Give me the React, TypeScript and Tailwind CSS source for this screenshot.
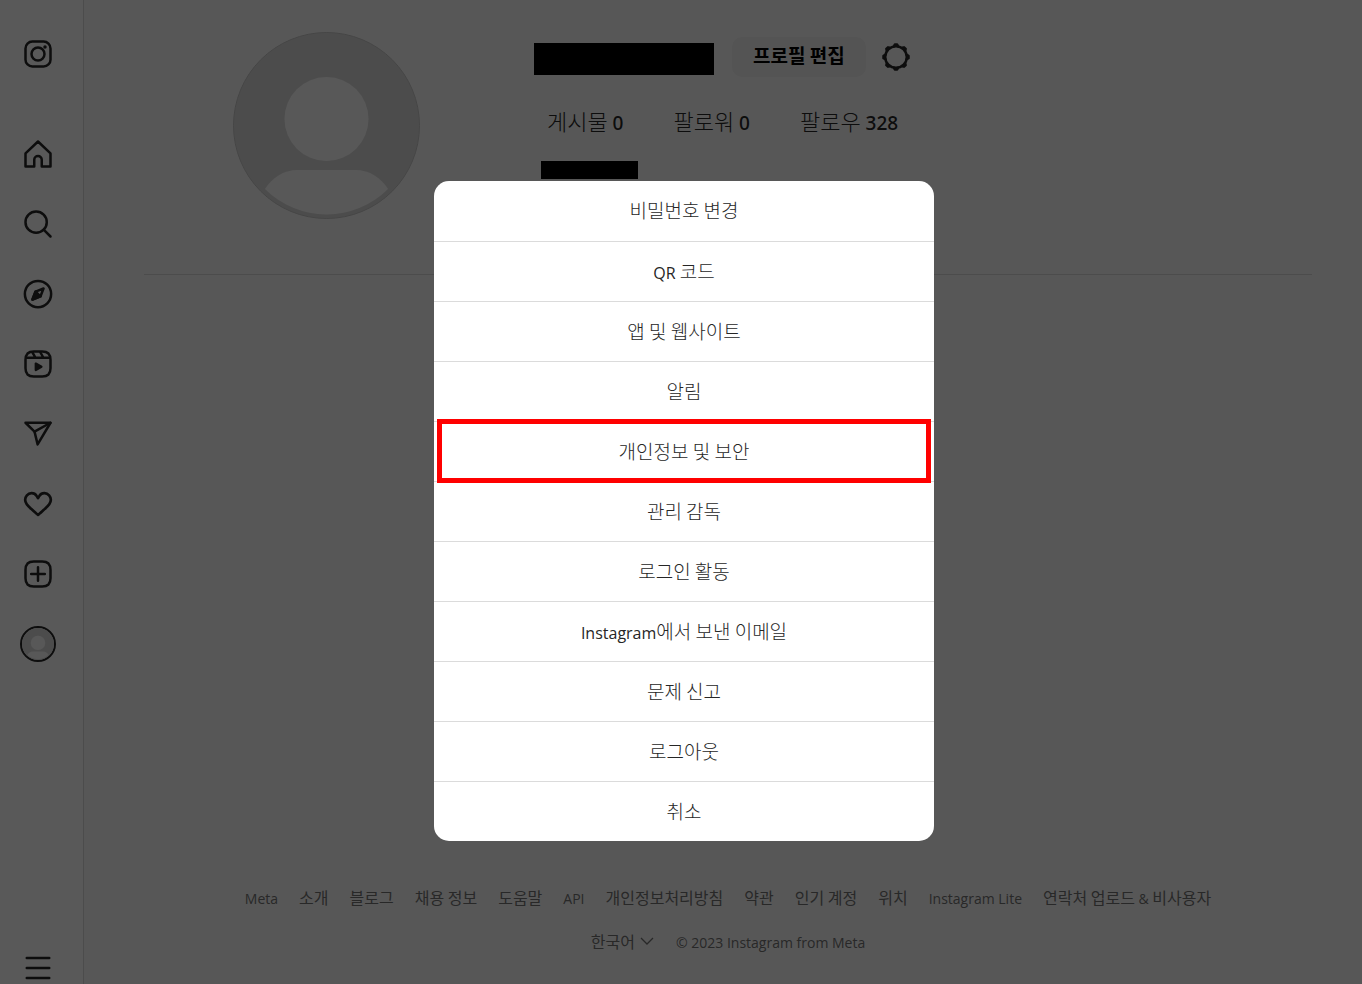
import React from "react";

const navButton = "flex h-[70px] w-full items-center justify-center text-[#262626]";

const menuItems = [
  { label: "비밀번호 변경" },
  { label: "QR 코드" },
  { label: "앱 및 웹사이트" },
  { label: "알림" },
  { label: "개인정보 및 보안", highlighted: true },
  { label: "관리 감독" },
  { label: "로그인 활동" },
  { label: "Instagram에서 보낸 이메일" },
  { label: "문제 신고" },
  { label: "로그아웃" },
  { label: "취소" },
];

const stats = [
  { label: "게시물", value: 0 },
  { label: "팔로워", value: 0 },
  { label: "팔로우", value: 328 },
];

const footerLinks = [
  "Meta",
  "소개",
  "블로그",
  "채용 정보",
  "도움말",
  "API",
  "개인정보처리방침",
  "약관",
  "인기 계정",
  "위치",
  "Instagram Lite",
  "연락처 업로드 & 비사용자",
];

// Latin words run wider than the Hangul next to them, so they get their own font and size
function MixedText({ text, latinClass }: { text: string; latinClass: string }) {
  return (
    <>
      {text.split(/([A-Za-z0-9©&]+(?: [A-Za-z0-9]+)*)/).map((part, index) =>
        index % 2 === 1 ? (
          <span key={index} className={latinClass}>
            {part}
          </span>
        ) : (
          part
        )
      )}
    </>
  );
}

function Icon({ children }: { children: React.ReactNode }) {
  return (
    <svg
      className="h-[30px] w-[30px]"
      viewBox="0 0 24 24"
      fill="none"
      stroke="currentColor"
      strokeWidth="2"
      strokeLinejoin="round"
      strokeLinecap="round"
      aria-hidden="true"
    >
      {children}
    </svg>
  );
}

function Avatar({ className }: { className: string }) {
  return (
    <svg className={className} viewBox="0 0 187 187" aria-hidden="true">
      <circle cx="93.500" cy="93.500" r="93" fill="#dbdbdb" stroke="#c7c7c7" />
      <circle cx="93.500" cy="87" r="42" fill="#fdfdfd" />
      <path d="M32 157C39 146 50 138 65 138H122C137 138 148 146 155 157A87 87 0 0 1 32 157Z" fill="#fdfdfd" />
    </svg>
  );
}

const navItems = [
  {
    name: "홈",
    icon: (
      <path d="M9.005 16.545a2.997 2.997 0 0 1 2.997-2.997A2.997 2.997 0 0 1 15 16.545V22h7V11.543L12 2 2 11.543V22h7.005Z" />
    ),
  },
  {
    name: "검색",
    icon: (
      <>
        <path d="M19 10.500A8.500 8.500 0 1 1 10.500 2a8.500 8.500 0 0 1 8.500 8.500Z" />
        <path d="m16.511 16.511 5.489 5.489" />
      </>
    ),
  },
  {
    name: "탐색 탭",
    icon: (
      <>
        <path d="M13.941 13.953 7.581 16.424 10.060 10.056 16.420 7.585Z" />
        <path d="M10.060 10.056 13.949 13.945 7.581 16.424Z" fill="currentColor" />
        <circle cx="12.001" cy="12.005" r="10.500" />
      </>
    ),
  },
  {
    name: "릴스",
    icon: (
      <>
        <path d="M2.050 7.002h19.900M13.504 2.001l2.858 5.001M7.207 2.110l2.795 4.892" strokeLinecap="butt" />
        <path d="M2 12.001v3.449c0 2.849.698 4.006 1.606 4.945.940.908 2.098 1.607 4.946 1.607h6.896c2.848 0 4.006-.699 4.946-1.607.908-.939 1.606-2.096 1.606-4.945V8.552c0-2.848-.698-4.006-1.606-4.945C19.454 2.699 18.296 2 15.448 2H8.552c-2.848 0-4.006.699-4.946 1.607C2.698 4.546 2 5.704 2 8.552Z" />
        <path
          d="M9.763 17.664a.908.908 0 0 1-.454-.787V11.630a.909.909 0 0 1 1.364-.788l4.545 2.624a.909.909 0 0 1 0 1.575l-4.545 2.624a.910.910 0 0 1-.910 0Z"
          fill="currentColor"
          stroke="none"
        />
      </>
    ),
  },
  {
    name: "메시지",
    icon: (
      <>
        <path d="M22 3 9.218 10.083" />
        <path d="M11.698 20.334 22 3.001H2l7.218 7.083 2.480 10.250Z" />
      </>
    ),
  },
  {
    name: "알림",
    icon: (
      <path
        d="M16.792 3.904A4.989 4.989 0 0 1 21.500 9.122c0 3.072-2.652 4.959-5.197 7.222-2.512 2.243-3.865 3.469-4.303 3.752-.477-.309-2.143-1.823-4.303-3.752C5.141 14.072 2.500 12.167 2.500 9.122a4.989 4.989 0 0 1 4.708-5.218 4.210 4.210 0 0 1 3.675 1.941c.840 1.175.980 1.763 1.120 1.763s.278-.588 1.110-1.766a4.170 4.170 0 0 1 3.679-1.938Z"
        transform="translate(12 12) scale(1.080 1.080) translate(-12 -12)"
      />
    ),
  },
  {
    name: "만들기",
    icon: (
      <>
        <path d="M2 12v3.450c0 2.849.698 4.005 1.606 4.944.940.909 2.098 1.608 4.946 1.608h6.896c2.848 0 4.006-.700 4.946-1.608C21.302 19.455 22 18.300 22 15.450V8.552c0-2.849-.698-4.006-1.606-4.945C19.454 2.700 18.296 2 15.448 2H8.552c-2.848 0-4.006.699-4.946 1.607C2.698 4.547 2 5.703 2 8.552Z" />
        <path d="M6.545 12.001h10.910M12.003 6.545v10.910" />
      </>
    ),
  },
];

function Sidebar() {
  return (
    <nav className="flex w-[84px] shrink-0 flex-col border-r border-[#dbdbdb] bg-white pr-[7px] pt-[19px]">
      <a href="#" aria-label="Instagram" className={`${navButton} mb-[30px]`}>
        <Icon>
          <rect x="2" y="2" width="20" height="20" rx="5.500" />
          <circle cx="12" cy="12" r="5.200" />
          <circle cx="17.600" cy="6.400" r="1.400" fill="currentColor" stroke="none" />
        </Icon>
      </a>
      {navItems.map((item) => (
        <a key={item.name} href="#" aria-label={item.name} className={navButton}>
          <Icon>{item.icon}</Icon>
        </a>
      ))}
      <a href="#" aria-label="프로필" className={navButton}>
        <span className="rounded-full border-2 border-[#262626]">
          <Avatar className="h-8 w-8" />
        </span>
      </a>
      <button type="button" aria-label="더 보기" className="mt-auto flex justify-center pb-px text-[#262626]">
        <Icon>
          <path d="M3 4h18M3 12h18M3 20h18" />
        </Icon>
      </button>
    </nav>
  );
}

function ProfileHeader() {
  return (
    <header className="flex h-[275px] border-b border-[#dbdbdb] pl-[89px] pt-8">
      <Avatar className="h-[187px] w-[187px] shrink-0" />
      <section className="ml-[114px]">
        <div className="flex items-start pt-[5px]">
          <div className="mt-[6px] h-8 w-[180px] bg-black" />
          <button
            type="button"
            className="ml-[18px] h-10 rounded-[10px] bg-[#efefef] px-[21px] pb-1 text-[19px] leading-6 font-bold text-black"
          >
            프로필 편집
          </button>
          <button type="button" aria-label="옵션" className="ml-[15px] flex h-10 items-center text-[#262626]">
            <svg className="h-[30px] w-[30px]" viewBox="0 0 24 24" fill="none" stroke="currentColor" aria-hidden="true">
              <circle cx="12" cy="12" r="8.635" strokeWidth="2" />
              <path
                d="M14.232 3.656a1.269 1.269 0 0 1-.796-.660L12.930 2h-1.860l-.505.996a1.269 1.269 0 0 1-.796.660m-.001 16.688a1.269 1.269 0 0 1 .796.660l.505.996h1.862l.505-.996a1.269 1.269 0 0 1 .796-.660M3.656 9.768a1.269 1.269 0 0 1-.660.796L2 11.070v1.862l.996.505a1.269 1.269 0 0 1 .660.796m16.688-.001a1.269 1.269 0 0 1 .660-.796L22 12.930v-1.860l-.996-.505a1.269 1.269 0 0 1-.660-.796M7.678 4.522a1.269 1.269 0 0 1-1.030.096l-1.060-.348L4.270 5.587l.348 1.062a1.269 1.269 0 0 1-.096 1.030m11.800 11.799a1.269 1.269 0 0 1 1.030-.096l1.060.348 1.318-1.317-.348-1.062a1.269 1.269 0 0 1 .096-1.030m-14.956.001a1.269 1.269 0 0 1 .096 1.030l-.348 1.060 1.317 1.318 1.062-.348a1.269 1.269 0 0 1 1.030.096m11.799-11.800a1.269 1.269 0 0 1-.096-1.030l.348-1.060-1.317-1.318-1.062.348a1.269 1.269 0 0 1-1.030-.096"
                fill="currentColor"
                strokeWidth="2"
                strokeLinejoin="round"
              />
            </svg>
          </button>
        </div>
        <ul className="ml-[13px] mt-[27px] flex gap-[50px] text-[22px] leading-8 font-light text-[#262626]">
          {stats.map((stat) => (
            <li key={stat.label}>
              {stat.label}{" "}
              <span className="font-['Noto_Sans'] text-[19px] font-medium">{stat.value}</span>
            </li>
          ))}
        </ul>
        <div className="ml-[7px] mt-[22px] h-[18px] w-[97px] bg-black" />
      </section>
    </header>
  );
}

function Footer() {
  const latinClass = "font-['Open_Sans'] text-[14px] leading-none";

  return (
    <footer className="mt-auto pb-[31px] text-[16px] leading-6 text-[#737373]">
      <ul className="flex flex-wrap justify-center gap-[21px]">
        {footerLinks.map((link) => (
          <li key={link}>
            <a href="#">
              <MixedText text={link} latinClass={latinClass} />
            </a>
          </li>
        ))}
      </ul>
      <div className="mt-5 flex justify-center gap-[21px]">
        <button type="button" className="flex items-center gap-1">
          한국어
          <svg className="h-4 w-4" viewBox="0 0 16 16" fill="none" stroke="currentColor" strokeWidth="1.300" aria-hidden="true">
            <path d="M2 5l6 6 6-6" />
          </svg>
        </button>
        <span>
          <MixedText text="© 2023 Instagram from Meta" latinClass={latinClass} />
        </span>
      </div>
    </footer>
  );
}

function OptionsDialog() {
  return (
    <div className="fixed inset-0 flex items-center justify-center bg-black/65 pl-[6px] pt-[38px]">
      <div role="dialog" aria-label="옵션" className="w-[500px] rounded-[15px] bg-white">
        <ul>
          {menuItems.map((item) => (
            <li key={item.label} className="relative h-[60px] border-t border-[#dbdbdb] first:border-t-0">
              <button type="button" className="h-full w-full pb-0.5 text-[19px] leading-6 font-light text-[#262626]">
                <MixedText text={item.label} latinClass="font-['Open_Sans'] text-[16px] leading-none font-normal" />
              </button>
              {item.highlighted && (
                <span className="pointer-events-none absolute inset-x-[3px] -top-[3px] -bottom-[2px] z-10 border-[5px] border-[#ff0000]" />
              )}
            </li>
          ))}
        </ul>
      </div>
    </div>
  );
}

export default function App() {
  return (
    <div className="flex min-h-screen bg-[#fafafa] font-['Noto_Sans_CJK_KR',sans-serif]">
      <Sidebar />
      <main className="flex flex-1 flex-col pl-[60px] pr-[50px]">
        <ProfileHeader />
        <Footer />
      </main>
      <OptionsDialog />
    </div>
  );
}
